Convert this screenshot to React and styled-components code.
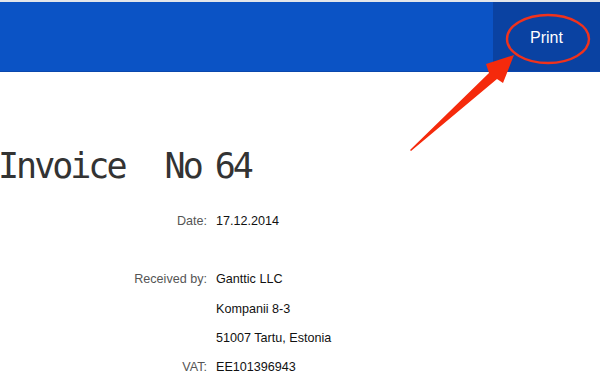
import React from "react";
import styled, { createGlobalStyle } from "styled-components";

const GlobalStyle = createGlobalStyle`
  html, body {
    margin: 0;
    padding: 0;
    background: #fff;
    overflow: hidden;
  }
  body {
    font-family: "Liberation Sans", Arial, sans-serif;
  }
`;

const Page = styled.div`
  position: relative;
  width: 600px;
  height: 382px;
  overflow: hidden;
  background: #fff;
  border-top: 2px solid #e4e6ea;
  box-sizing: border-box;
`;

const Header = styled.header`
  display: flex;
  height: 69px;
  background-color: #0b53c5;
  border-bottom: 1px solid #0a47ad;
`;

const Spacer = styled.div`
  flex: 1;
`;

const PrintButton = styled.button`
  width: 107px;
  border: 0;
  margin: 0;
  padding: 2px 0 0;
  background-color: #0a42a2;
  color: #fff;
  font-family: "Liberation Sans", Arial, sans-serif;
  font-size: 16px;
  cursor: pointer;
`;

const Content = styled.main`
  padding-top: 72px;
`;

const Title = styled.h1`
  margin: 0 0 0 -2px;
  font-family: "DejaVu Sans Mono", monospace;
  font-weight: normal;
  font-size: 35px;
  line-height: 44px;
  letter-spacing: -3px;
  word-spacing: 22px;
  color: #333;
  white-space: nowrap;
`;

const Num = styled.span`
  margin-left: 14px;
`;

const Details = styled.div`
  display: grid;
  grid-template-columns: 207px auto;
  column-gap: 9px;
  margin-top: 19px;
  font-size: 12.6px;
  line-height: 29.2px;
`;

const Label = styled.div`
  text-align: right;
  color: #555;
`;

const Value = styled.div`
  color: #111;
`;

const Annotation = styled.svg`
  position: absolute;
  left: 0;
  top: 0;
  pointer-events: none;
`;

const rows = [
  ["Date:", "17.12.2014"],
  ["", ""],
  ["Received by:", "Ganttic LLC"],
  ["", "Kompanii 8-3"],
  ["", "51007 Tartu, Estonia"],
  ["VAT:", "EE101396943"],
];

export default function App() {
  return (
    <Page>
      <GlobalStyle />
      <Header>
        <Spacer />
        <PrintButton>Print</PrintButton>
      </Header>
      <Content>
        <Title>
          Invoice No<Num>64</Num>
        </Title>
        <Details>
          {rows.map(([label, value], i) => (
            <React.Fragment key={i}>
              <Label>{label || "\u00a0"}</Label>
              <Value>{value || "\u00a0"}</Value>
            </React.Fragment>
          ))}
        </Details>
      </Content>
      <Annotation width="600" height="382" viewBox="0 0 600 382">
        <ellipse cx="548" cy="37" rx="41" ry="24" fill="none" stroke="#f0321c" strokeWidth="2.4" />
        <path d="M410 148 L489 71 L486 62 L514 53 L503 81 L497 77 L411 149 Z" fill="#f52a0c" />
      </Annotation>
    </Page>
  );
}
